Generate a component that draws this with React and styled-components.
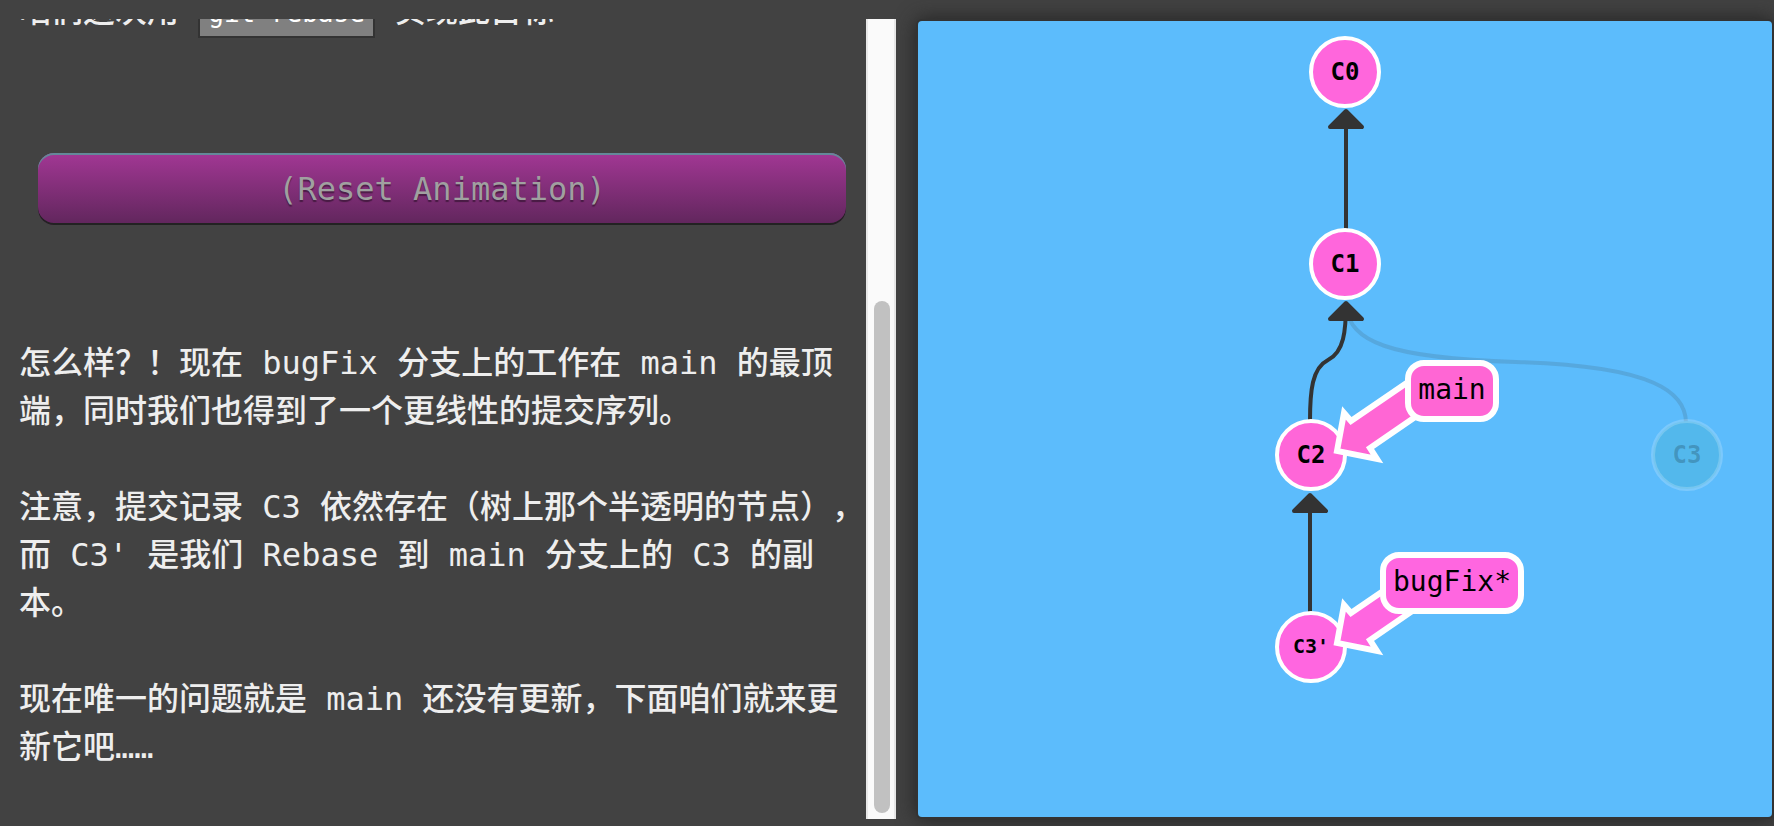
import React from 'react';
import styled, { createGlobalStyle } from 'styled-components';

const MONO = `"DejaVu Sans Mono", "Noto Sans CJK SC", monospace`;

const GlobalStyle = createGlobalStyle`
  *, *::before, *::after { box-sizing: border-box; }
  body { margin: 0; background: #424242; font-family: ${MONO}; }
`;

const Page = styled.main`
  display: grid;
  grid-template-columns: minmax(0, 896fr) minmax(0, 858fr);
  column-gap: 20px;
  height: 100vh;
  padding: 19px 0 7px;
  overflow: hidden;
`;

const Lesson = styled.section`
  display: flex;
  min-height: 0;
`;

const LessonBody = styled.div`
  flex: 1;
  min-width: 0;
  display: flex;
  flex-direction: column;
  justify-content: flex-end;
  overflow: hidden;
  padding: 0 0 48px 19px;
  color: #eee;
  font-size: 32px;
  font-weight: 500;
  line-height: 48px;
  text-spacing-trim: space-all;
`;

const Paragraph = styled.p`
  flex: none;
  margin: 0 0 ${({ $last }) => ($last ? 0 : 48)}px;
`;

const Code = styled.code`
  padding: 8px;
  border: 2px solid #333;
  background: #808080;
  color: #fff;
  font: 500 26px/36px ${MONO};
`;

const ResetButton = styled.button`
  flex: none;
  height: 72px;
  margin: 70px 20px 114px 19px;
  border: 0;
  border-radius: 16px;
  background: linear-gradient(#a23794, #60265c);
  box-shadow: inset 0 2px #648899, inset 0 -2px #222;
  color: #a0a0a0;
  font: 32px/48px ${MONO};
  text-shadow: 0 2px 1px rgba(0, 0, 0, 0.4);
  cursor: pointer;
`;

const ScrollTrack = styled.div`
  flex: none;
  display: flex;
  flex-direction: column;
  justify-content: flex-end;
  width: 30px;
  padding: 6px;
  border: solid #e8e8e8;
  border-width: 0 2px;
  background: #fafafa;
`;

const ScrollThumb = styled.div`
  width: 16px;
  height: 65%;
  border-radius: 8px;
  background: #c1c1c1;
`;

const Canvas = styled.section`
  min-height: 0;
  margin: 2px;
  border-radius: 4px;
  background: #5cbcfc;
  box-shadow: 0 0 0 2px #333, 0 0 20px 2px #222;
`;

const Tree = styled.svg`
  display: block;
  width: 100%;
  height: 100%;
  font-family: ${MONO};
`;

const Edge = styled.path`
  fill: none;
  stroke: #333;
  stroke-width: 4px;
  opacity: ${({ $faded }) => ($faded ? 0.15 : 1)};
`;

const EdgeHead = styled.path`
  fill: #333;
  stroke: #333;
  stroke-width: 4px;
  stroke-linejoin: round;
`;

const CommitCircle = styled.circle`
  fill: ${({ $fill }) => $fill};
  stroke: #fff;
  stroke-opacity: ${({ $faded }) => ($faded ? 0.2 : 1)};
  stroke-width: 4px;
`;

const CommitLabel = styled.text`
  fill: #000;
  fill-opacity: ${({ $faded }) => ($faded ? 0.2 : 1)};
  font-size: ${({ $small }) => ($small ? 20 : 24)}px;
  font-weight: 700;
  text-anchor: middle;
`;

const BranchShape = styled.g`
  fill: ${({ $fill }) => $fill};
  stroke: #fff;
  stroke-width: 6px;
`;

const BranchLabel = styled.text`
  fill: #000;
  font-size: 28px;
  text-anchor: middle;
`;

const HEADS = [
  [428, 90],
  [428, 282],
  [392, 474],
];

const COMMITS = [
  { id: 'C0', x: 427, y: 51, fill: '#ff66dc' },
  { id: 'C1', x: 427, y: 243, fill: '#ff66dc' },
  { id: 'C2', x: 393, y: 434, fill: '#ff66d8' },
  { id: "C3'", x: 393, y: 626, fill: '#ff66e0', small: true },
  { id: 'C3', x: 769, y: 434, fill: '#53b8ec', faded: true },
];

const BRANCHES = [
  { name: 'main', y: 342, width: 88, fill: '#ff66d4' },
  { name: 'bugFix*', y: 534, width: 138, fill: '#ff66e0' },
];

function Commit({ id, x, y, fill, small, faded }) {
  return (
    <g>
      <CommitCircle cx={x} cy={y} r="34" $fill={fill} $faded={faded} />
      <CommitLabel x={x} y={y + (small ? 6 : 8)} $small={small} $faded={faded}>
        {id}
      </CommitLabel>
    </g>
  );
}

function Branch({ name, y, width, fill }) {
  return (
    <g transform={`translate(0 ${y})`}>
      <BranchShape $fill={fill}>
        <path
          strokeMiterlimit="10"
          d="M419 88 L426 50 L433 58 L509 6 L519 39 L452 85 L459 96 Z"
        />
        <rect x={534 - width / 2} y="0" width={width} height="56" rx="16" />
      </BranchShape>
      <BranchLabel x="534" y="36">{name}</BranchLabel>
    </g>
  );
}

function CommitTree() {
  return (
    <Tree viewBox="0 0 854 796" role="img" aria-label="提交树">
      <Edge d="M428 106V243" />
      <Edge $faded d="M428 286C433 320 468 337 598 341C738 345 768 372 768 402" />
      <Edge d="M428 282C428 310 426 331 410 339C394 347 392 370 392 400" />
      <Edge d="M392 490V626" />
      {HEADS.map(([x, y]) => (
        <EdgeHead key={y} d={`M${x} ${y}l16 16h-32z`} />
      ))}
      {COMMITS.map((commit) => (
        <Commit key={commit.id} {...commit} />
      ))}
      {BRANCHES.map((branch) => (
        <Branch key={branch.name} {...branch} />
      ))}
    </Tree>
  );
}

export default function App() {
  return (
    <>
      <GlobalStyle />
      <Page lang="zh-CN">
        <Lesson>
          <LessonBody>
            <Paragraph>
              咱们这次用 <Code>git rebase</Code> 实现此目标
            </Paragraph>
            <ResetButton type="button">(Reset Animation)</ResetButton>
            <Paragraph>
              怎么样？！现在 bugFix 分支上的工作在 main 的最顶端，同时我们也得到了一个更线性的提交序列。
            </Paragraph>
            <Paragraph>
              注意，提交记录 C3 依然存在（树上那个半透明的节点），而 C3' 是我们 Rebase 到 main 分支上的 C3 的副本。
            </Paragraph>
            <Paragraph $last>
              现在唯一的问题就是 main 还没有更新，下面咱们就来更新它吧……
            </Paragraph>
          </LessonBody>
          <ScrollTrack aria-hidden="true">
            <ScrollThumb />
          </ScrollTrack>
        </Lesson>
        <Canvas>
          <CommitTree />
        </Canvas>
      </Page>
    </>
  );
}
